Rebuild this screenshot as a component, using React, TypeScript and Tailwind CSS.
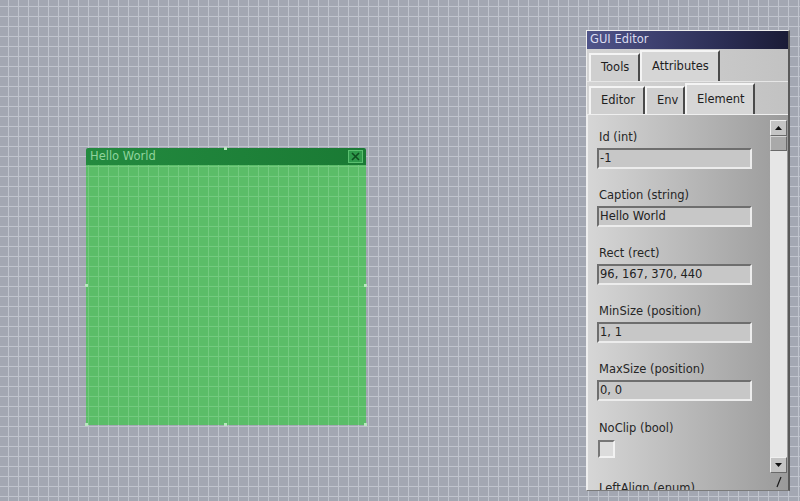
import React from "react";

const font = { fontFamily: '"DejaVu Sans", "Liberation Sans", sans-serif' };

function Field({ label, value }: { label: string; value: string }) {
  return (
    <div className="flex flex-col">
      <div className="h-4 leading-4 text-[11.5px] text-[#262626] pl-[2px] mt-[1px]">{label}</div>
      <div className="mt-[3px] h-[21px] w-[155px] bg-[#c7c7c7] border-t-2 border-l-2 border-t-[#6e6e6e] border-l-[#6e6e6e] border-b-2 border-r-2 border-b-[#ececec] border-r-[#ececec] pl-[1px] text-[11.5px] leading-[17px] text-[#222]">
        {value}
      </div>
    </div>
  );
}

function Tab({ label, w, active }: { label: string; w: string; active?: boolean }) {
  return (
    <div
      className={`${w} ${active ? "h-[31px] bg-[#d6d6d6]" : "h-[28px] bg-[#cfcfcf]"} flex items-center pl-[10px] border-t-2 border-l-2 border-t-[#f4f4f4] border-l-[#f4f4f4] border-r-2 border-r-[#4a4a4a] text-[11.5px] text-[#1e1e1e]`}
    >
      {label}
    </div>
  );
}

export default function App() {
  return (
    <div
      style={font}
      className="relative w-[800px] h-[501px] overflow-hidden bg-[#a3a7b2] bg-[linear-gradient(to_right,#c0c4cd_1px,transparent_1px),linear-gradient(to_bottom,#c0c4cd_1px,transparent_1px)] bg-[size:10px_10px] bg-[position:8px_6px]"
    >
      {/* Green window */}
      <div className="absolute left-[86px] top-[148px] w-[280px] h-[277px] flex flex-col rounded-[2px] overflow-visible">
        <div className="h-[17px] flex items-center justify-between bg-[linear-gradient(to_right,#238a3f,#1a7a34)] pl-[4px] pr-[3px] rounded-t-[2px]">
          <span className="text-[11.5px] text-[#8fd39c] leading-none">Hello World</span>
          <div className="w-[15px] h-[13px] bg-[#2f9a4b] border border-[#5bbf70] flex items-center justify-center">
            <svg width="9" height="9" viewBox="0 0 9 9">
              <path d="M1 1 L8 8 M8 1 L1 8" stroke="#0f4e20" strokeWidth="1.6" />
            </svg>
          </div>
        </div>
        <div className="flex-1 bg-fixed bg-[#5bbd68] bg-[linear-gradient(to_right,#74ca80_1px,transparent_1px),linear-gradient(to_bottom,#74ca80_1px,transparent_1px)] bg-[size:10px_10px] bg-[position:8px_6px]" />
        {/* handles */}
        <div className="absolute left-[138px] -top-[1px] w-[3px] h-[3px] bg-[#b9e6bf]" />
        <div className="absolute -left-[1px] top-[136px] w-[3px] h-[3px] bg-[#b9e6bf]" />
        <div className="absolute -right-[1px] top-[136px] w-[3px] h-[3px] bg-[#b9e6bf]" />
        <div className="absolute left-[138px] -bottom-[1px] w-[3px] h-[3px] bg-[#b9e6bf]" />
        <div className="absolute -left-[1px] -bottom-[1px] w-[3px] h-[3px] bg-[#b9e6bf]" />
        <div className="absolute -right-[1px] -bottom-[1px] w-[3px] h-[3px] bg-[#b9e6bf]" />
      </div>

      {/* GUI Editor panel */}
      <div className="absolute left-[586px] top-[30px] w-[204px] h-[461px] flex flex-col bg-[#cdcdcd] border-t border-l border-[#eeeeee] border-r-2 border-r-[#5a5a5a] border-b border-b-[#7a7a7a]">
        <div className="h-[18px] flex items-center pl-[3px] bg-[linear-gradient(to_right,#50548a,#2a2c52_70%,#1a1b36)] text-[11.5px] text-[#dadcf0]">
          GUI Editor
        </div>
        <div className="h-[32px] flex items-end pl-[2px] bg-[linear-gradient(to_right,#d4d4d4,#c2c2c2)]">
          <Tab label="Tools" w="w-[51px]" />
          <Tab label="Attributes" w="w-[80px]" active />
        </div>
        <div className="h-[33px] flex items-end pl-[2px] bg-[linear-gradient(to_right,#d4d4d4,#c2c2c2)] border-t border-t-[#e6e6e6]">
          <Tab label="Editor" w="w-[56px]" />
          <Tab label="Env" w="w-[40px]" />
          <Tab label="Element" w="w-[70px]" active />
        </div>
        <div className="relative flex-1 overflow-hidden bg-[linear-gradient(to_right,#d6d6d6,#b8b8b8_50%,#9a9a9a)] border-t border-l border-t-[#efefef] border-l-[#efefef]">
          <div className="flex flex-col gap-[17px] pl-[9px] pt-[13px]">
            <Field label="Id (int)" value="-1" />
            <Field label="Caption (string)" value="Hello World" />
            <Field label="Rect (rect)" value="96, 167, 370, 440" />
            <Field label="MinSize (position)" value="1, 1" />
            <Field label="MaxSize (position)" value="0, 0" />
            <div className="flex flex-col">
              <div className="h-4 leading-4 text-[11.5px] text-[#262626] pl-[2px] mt-[2px]">NoClip (bool)</div>
              <div className="mt-[4px] ml-[1px] w-[17px] h-[18px] bg-[#dcdcdc] border-t-2 border-l-2 border-t-[#777] border-l-[#777] border-b-2 border-r-2 border-b-[#f2f2f2] border-r-[#f2f2f2]" />
            </div>
            <div className="h-4 leading-4 text-[11.5px] text-[#262626] pl-[2px] mt-[5px]">LeftAlign (enum)</div>
          </div>

          {/* scrollbar */}
          <div className="absolute right-[1px] top-[5px] w-[17px] h-[353px] flex flex-col bg-[#e6e6e6]">
            <div className="h-[16px] flex items-center justify-center bg-[#c4c4c4] border-t border-l border-[#efefef] border-r border-b border-r-[#6a6a6a] border-b-[#6a6a6a]">
              <svg width="7" height="4" viewBox="0 0 7 4"><path d="M3.5 0 L7 4 L0 4 Z" fill="#111" /></svg>
            </div>
            <div className="h-[15px] bg-[#a9a9a9] border-t border-l border-[#d6d6d6] border-r border-b border-r-[#6a6a6a] border-b-[#6a6a6a]" />
            <div className="flex-1" />
            <div className="h-[16px] flex items-center justify-center bg-[#c4c4c4] border-t border-l border-[#efefef] border-r border-b border-r-[#6a6a6a] border-b-[#6a6a6a]">
              <svg width="7" height="4" viewBox="0 0 7 4"><path d="M0 0 L7 0 L3.5 4 Z" fill="#111" /></svg>
            </div>
          </div>
          <svg className="absolute right-[6px] bottom-[2px]" width="6" height="12" viewBox="0 0 6 12">
            <path d="M5 1 L1 11" stroke="#1a1a1a" strokeWidth="1.2" />
          </svg>
        </div>
      </div>
    </div>
  );
}
